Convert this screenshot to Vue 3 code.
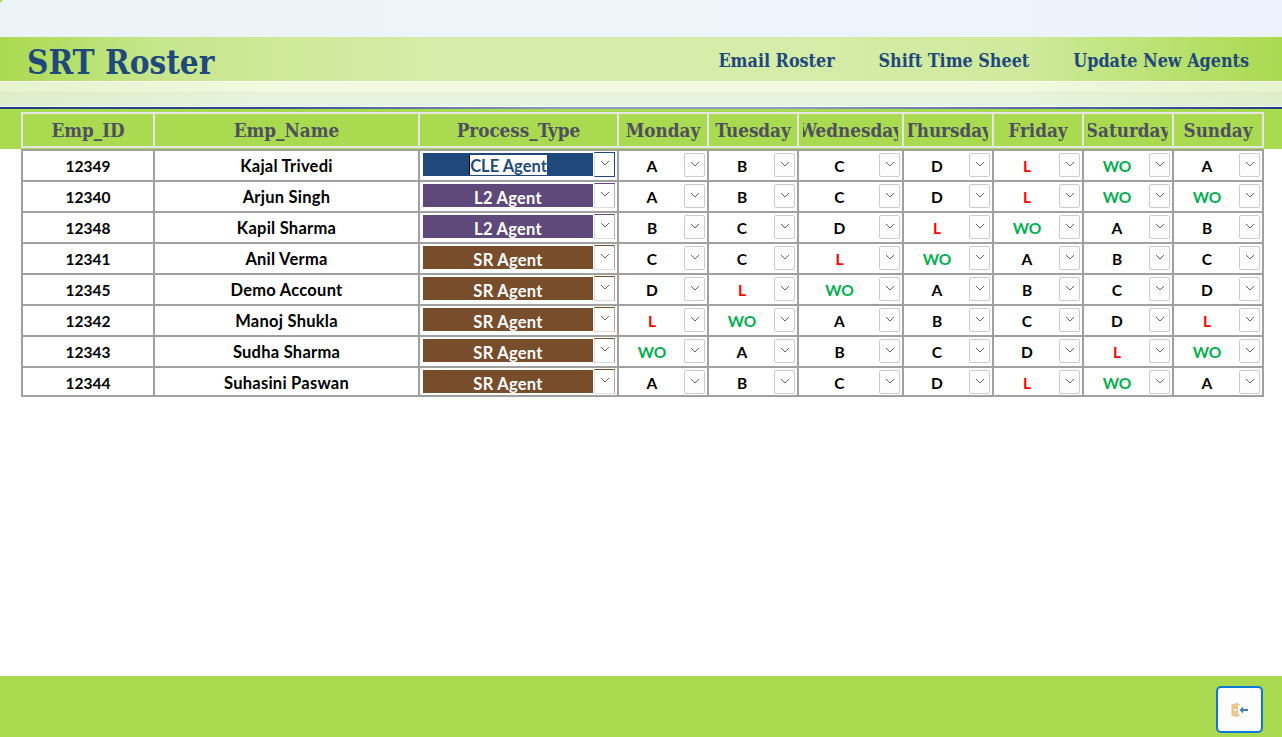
<script setup>
const days = ['Monday','Tuesday','Wednesday','Thursday','Friday','Saturday','Sunday']
const heads = ['Emp_ID','Emp_Name','Process_Type',...days]
const rows = [
  ['12349','Kajal Trivedi','CLE Agent','cle','A B C D L WO A'],
  ['12340','Arjun Singh','L2 Agent','l2','A B C D L WO WO'],
  ['12348','Kapil Sharma','L2 Agent','l2','B C D L WO A B'],
  ['12341','Anil Verma','SR Agent','sr','C C L WO A B C'],
  ['12345','Demo Account','SR Agent','sr','D L WO A B C D'],
  ['12342','Manoj Shukla','SR Agent','sr','L WO A B C D L'],
  ['12343','Sudha Sharma','SR Agent','sr','WO A B C D L WO'],
  ['12344','Suhasini Paswan','SR Agent','sr','A B C D L WO A'],
].map(([id,name,type,kind,s],i)=>({id,name,type,kind,selected:i===0,shifts:s.split(' ')}))
const navLinks = ['Email Roster','Shift Time Sheet','Update New Agents']
const shiftClass = s => s==='WO' ? 'wo' : s==='L' ? 'leave' : ''
</script>

<template>
  <div class="page">
    <div class="top"></div>
    <header class="banner">
      <h1 class="title">SRT Roster</h1>
      <nav class="nav"><a v-for="l in navLinks" :key="l">{{ l }}</a></nav>
    </header>
    <div class="gloss"></div>
    <div class="rule"></div>
    <main class="main">
      <div class="band">
        <div class="grid heads">
          <div v-for="h in heads" :key="h" class="head"><div class="clip"><span>{{ h }}</span></div></div>
        </div>
      </div>
      <div class="grid body">
        <template v-for="r in rows" :key="r.id">
          <div class="cell">{{ r.id }}</div>
          <div class="cell name">{{ r.name }}</div>
          <div class="cell proc">
            <div class="pill" :class="r.kind">
              <span :class="r.selected ? 'sel' : 'plain'">{{ r.type }}</span>
            </div>
            <div class="drop big" :class="r.kind">
              <svg width="10" height="6" viewBox="0 0 10 6"><path d="M1 1l4 4 4-4" fill="none" stroke="#666" stroke-width="1"/></svg>
            </div>
          </div>
          <div v-for="(s,i) in r.shifts" :key="i" class="cell shift">
            <span class="val" :class="shiftClass(s)">{{ s }}</span>
            <div class="drop">
              <svg width="10" height="6" viewBox="0 0 10 6"><path d="M1 1l4 4 4-4" fill="none" stroke="#666" stroke-width="1"/></svg>
            </div>
          </div>
        </template>
      </div>
    </main>
    <footer class="footer">
      <button class="exit" aria-label="Exit">
        <svg width="18" height="18" viewBox="0 0 18 18">
          <path d="M0.500 3h2l4.500-1.500v15L2.500 15h-2z" fill="#eec68d"/>
          <path d="M7 3h2v1.500H7zM7 13.500h2V15H7z" fill="#eec68d"/>
          <rect x="3.500" y="8" width="2" height="2" fill="#fff"/>
          <path d="M8.500 9l3.500-3.500v2.500H17v2h-5v2.500z" fill="#3f7fc0"/>
        </svg>
      </button>
    </footer>
  </div>
</template>

<style scoped>
.page { width: 1282px; height: 737px; display: flex; flex-direction: column; overflow: hidden; background: #fff; font-family: "Lato", "Liberation Sans", sans-serif; }
.top { height: 37px; background: radial-gradient(circle at 0 0, #a9da4f 2px, transparent 3px), linear-gradient(90deg, #ecf4f8, #edf3fc); }
.banner { height: 44px; display: flex; align-items: center; justify-content: space-between; padding: 0 33px 0 27px; background: linear-gradient(90deg, #a9da4f 0%, #c6e68c 12%, #d6edaa 35%, #d6edaa 60%, #cfea9c 80%, #a9da4f 100%); box-sizing: border-box; }
.title { margin: 7px 0 0; font: bold 33px "DejaVu Serif Condensed", "DejaVu Serif", serif; color: #1f497d; }
.nav { display: flex; gap: 44px; margin-top: 2px; }
.nav a { font: bold 17.800px "DejaVu Serif Condensed", "DejaVu Serif", serif; color: #1f497d; }
.gloss { height: 25px; margin-top: 1px; border-bottom: 1px solid #fff; box-sizing: border-box; background: linear-gradient(90deg, rgba(190,222,150,.25) 0%, rgba(255,255,255,0) 22%, rgba(255,255,255,0) 78%, rgba(190,222,150,.25) 100%), linear-gradient(180deg, #f2f9de 0%, #f4fae2 38%, #e9f2d6 42%, #e8f3de 75%, #e3f4e6 100%); }
.rule { height: 2px; background: linear-gradient(90deg, #1f3f7d 0%, #2f4f85 20%, #8b9fc0 45%, #8b9fc0 60%, #1f3f7d 100%); }
.main { flex: 1; display: flex; flex-direction: column; }
.band { background: #a9da4f; height: 40px; padding: 3px 0 0 21px; box-sizing: border-box; }
.grid { display: grid; width: 1243px; box-sizing: border-box; gap: 2px; padding: 2px; grid-template-columns: 130px 263px 197px 88px 88px 103px 88px 88px 88px 88px; }
.heads { background: #e6e6e6; height: 36px; grid-template-rows: 32px; }
.head { background: #a9da4f; display: flex; align-items: center; justify-content: center; padding: 0 4px; box-sizing: border-box; font: bold 18.700px "DejaVu Serif Condensed", "DejaVu Serif", serif; color: #4f4f5f; }
.clip { width: 100%; display: flex; justify-content: center; overflow: hidden; white-space: nowrap; margin-top: -1px; }
.clip span { flex: none; }
.body { background: #a0a0a0; margin-left: 21px; grid-template-rows: repeat(7, 29px) 27px; }
.cell { background: #fff; display: flex; align-items: flex-start; justify-content: center; font-size: 15.500px; line-height: 21px; font-weight: 700; color: #000; padding-top: 5px; box-sizing: border-box; overflow: hidden; }
.name { font-size: 16.500px; letter-spacing: .25px; }
.proc { padding: 0 2px 0 3px; justify-content: flex-start; font-size: 16.500px; letter-spacing: .25px; }
.pill { flex: none; width: 170px; height: 23px; margin: 2px 1px 0 0; color: #fff; display: flex; align-items: flex-end; justify-content: center; overflow: hidden; }
.pill.cle { background: #1f497d; }
.pill.l2 { background: #5f497a; }
.pill.sr { background: #784d2c; }
.plain { line-height: 20px; margin-bottom: -1px; }
.sel { background: #fff; color: #1f497d; border-left: 1px solid #000; height: 20px; line-height: 22px; margin-bottom: 1px; letter-spacing: 0; }
.shift { justify-content: flex-start; padding: 5px 2px 0 1px; position: relative; }
.val { flex: 1; text-align: center; }
.wo { color: #00b050; }
.leave { color: #f00; }
.drop { flex: none; width: 21px; height: 24px; margin-top: -3px; display: flex; align-items: center; justify-content: center; padding-bottom: 3px; border: 1px solid #ccc; border-radius: 2px; background: #fdfdfd; box-sizing: border-box; }
.drop.big { margin-top: 1px; height: 25px; border-radius: 0; background: #fff; border-color: #ddd; padding-bottom: 4px; }
.drop.big.cle { border-top: 1px solid #1f497d; border-right-color: #1f497d; border-bottom-color: #1f497d; }
.drop.big.l2 { border-top: 1px solid #5f497a; border-right-color: #b8accb; }
.drop.big.sr { border-top: 1px solid #784d2c; border-right-color: #c0a38d; }
.footer { height: 61px; margin-top: auto; background: #a9da4f; display: flex; justify-content: flex-end; padding: 10px 19px 0 0; box-sizing: border-box; }
.exit { width: 47px; height: 47px; border: 2px solid #0a78d7; border-radius: 5px; background: #fdfdfd; padding: 0; display: flex; align-items: center; justify-content: center; }
</style>
